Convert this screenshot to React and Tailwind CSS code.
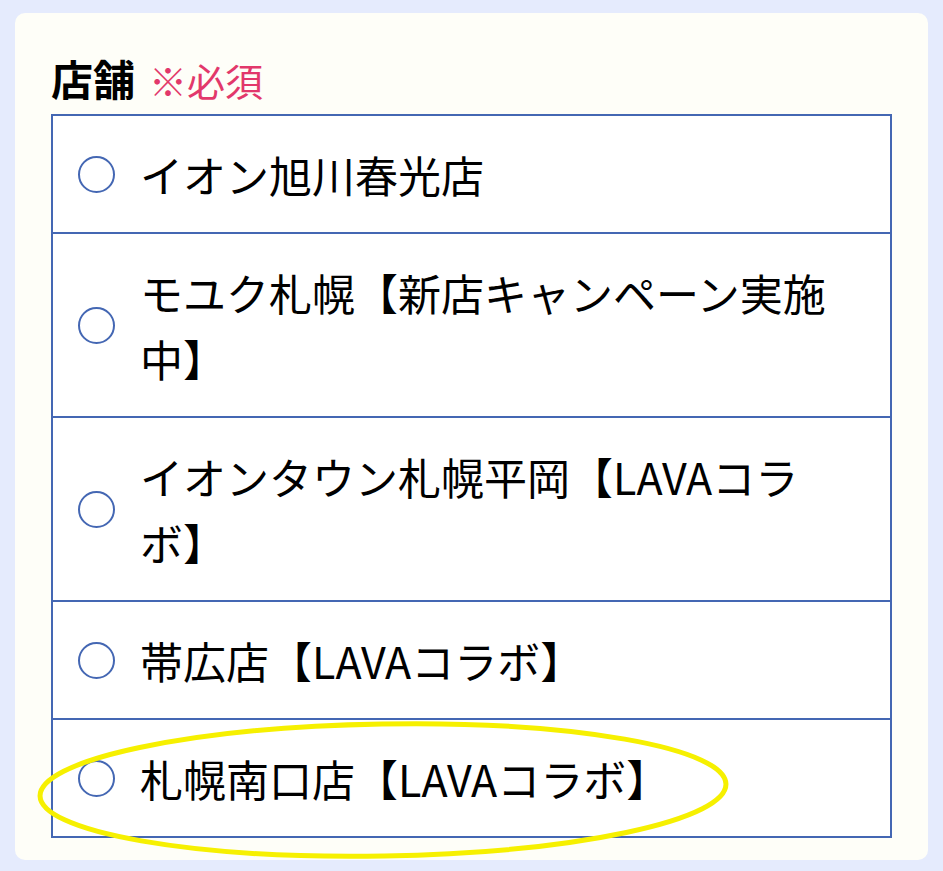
import React from "react";

const stores = [
  "イオン旭川春光店",
  "モユク札幌【新店キャンペーン実施中】",
  "イオンタウン札幌平岡【LAVAコラボ】",
  "帯広店【LAVAコラボ】",
  "札幌南口店【LAVAコラボ】",
];

export default function App() {
  return (
    <div
      className="relative w-[943px] h-[871px] bg-[#e5ebfd] pt-[13px] pl-[15px] overflow-hidden"
      style={{ fontFamily: '"Noto Sans CJK JP", "Noto Sans", sans-serif' }}
    >
      <div className="w-[913px] h-[847px] bg-[#fefef8] rounded-[10px] px-[36px] pt-[44px]">
        {/* label */}
        <div className="flex items-end gap-[14px] mb-[15px] h-[42px]">
          <span className="text-[42px] leading-none font-bold text-black">店舗</span>
          <span className="text-[38px] leading-none text-[#e2386b]">※必須</span>
        </div>

        {/* radio list */}
        <div className="border-2 border-[#4467b3] divide-y-2 divide-[#4467b3] bg-white">
          {stores.map((name) => (
            <label key={name} className="flex items-center gap-[25px] pl-[25px] pr-[46px] py-[25px] cursor-pointer">
              <span className="shrink-0 w-[37px] h-[37px] rounded-full border-2 border-[#4467b3]" />
              <span className="text-[43px] leading-[66px] text-black">{name}</span>
            </label>
          ))}
        </div>
      </div>

      {/* highlight annotation */}
      <svg className="absolute left-0 top-0 pointer-events-none" width="943" height="871">
        <ellipse cx="383" cy="790" rx="343" ry="66" fill="none" stroke="#f6f000" strokeWidth="5" transform="rotate(-1 383 790)" />
      </svg>
    </div>
  );
}
